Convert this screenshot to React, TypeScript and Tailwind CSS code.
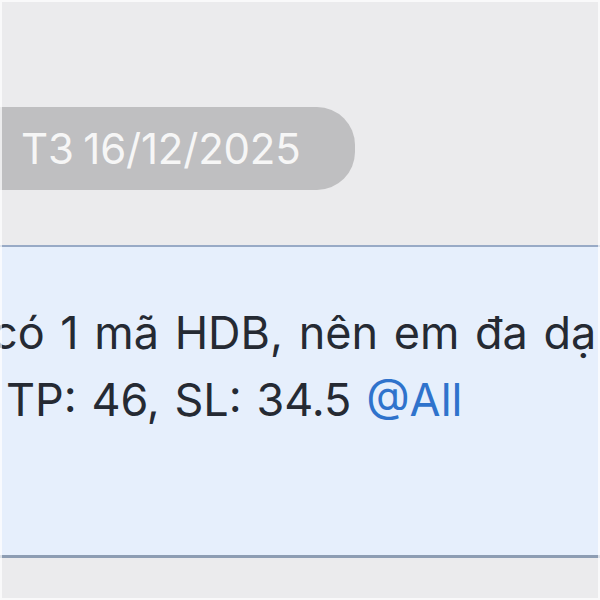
export default function App() {
  return (
    <div
      className="relative w-[600px] h-[600px] overflow-hidden bg-[#ebebed]"
      style={{ fontFamily: "Inter, Roboto, 'Noto Sans', sans-serif" }}
    >
      <div className="pt-[107px]">
        <div className="ml-[-40px] w-[395px] h-[83px] rounded-r-[38px] bg-[#bfbfc1] flex items-center pl-[61px]">
          <span className="text-[42px] leading-none text-[#f6f6f6] tracking-[-0.2px] [word-spacing:-2px]">T3 16/12/2025</span>
        </div>
      </div>
      <div className="mt-[55px] ml-[-20px] w-[640px] h-[313px] bg-[#e6effc] border-t-2 border-t-[#98aac6] border-b-[3px] border-b-[#8d9db3]">
        <div className="pt-[52px] text-[45px] leading-[67px] text-[#252a33] whitespace-nowrap">
          <div className="ml-[12px] [word-spacing:3px]">có 1 mã HDB, nên em đa dạ</div>
          <div className="ml-[26px] [word-spacing:2px]">
            TP: 46, SL: 34.5 <span className="text-[#2f73cc]">@All</span>
          </div>
        </div>
      </div>
      <div className="pointer-events-none absolute inset-0 border-2 border-white/70" />
    </div>
  );
}
